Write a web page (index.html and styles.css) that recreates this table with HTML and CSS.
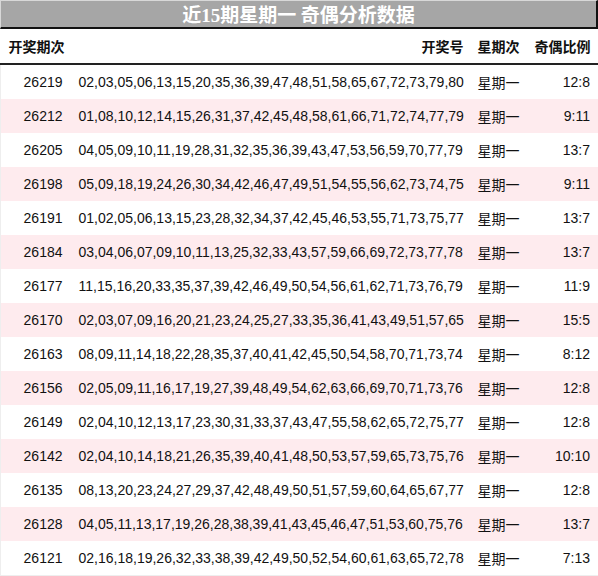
FILE: index.html
```html
<!DOCTYPE html>
<html lang="zh">
<head>
<meta charset="utf-8">
<title>近15期星期一 奇偶分析数据</title>
<link rel="stylesheet" href="styles.css">
</head>
<body>
<div class="title">近<span class="num">15</span>期星期一 奇偶分析数据</div>
<table class="data">
  <colgroup>
    <col class="c1"><col class="c2"><col class="c3"><col class="c4">
  </colgroup>
  <thead>
    <tr><th class="left">开奖期次</th><th class="right">开奖号</th><th class="week">星期次</th><th class="right">奇偶比例</th></tr>
  </thead>
  <tbody>
    <tr><td class="right">26219</td><td>02,03,05,06,13,15,20,35,36,39,47,48,51,58,65,67,72,73,79,80</td><td class="week">星期一</td><td class="right">12:8</td></tr>
    <tr><td class="right">26212</td><td>01,08,10,12,14,15,26,31,37,42,45,48,58,61,66,71,72,74,77,79</td><td class="week">星期一</td><td class="right">9:11</td></tr>
    <tr><td class="right">26205</td><td>04,05,09,10,11,19,28,31,32,35,36,39,43,47,53,56,59,70,77,79</td><td class="week">星期一</td><td class="right">13:7</td></tr>
    <tr><td class="right">26198</td><td>05,09,18,19,24,26,30,34,42,46,47,49,51,54,55,56,62,73,74,75</td><td class="week">星期一</td><td class="right">9:11</td></tr>
    <tr><td class="right">26191</td><td>01,02,05,06,13,15,23,28,32,34,37,42,45,46,53,55,71,73,75,77</td><td class="week">星期一</td><td class="right">13:7</td></tr>
    <tr><td class="right">26184</td><td>03,04,06,07,09,10,11,13,25,32,33,43,57,59,66,69,72,73,77,78</td><td class="week">星期一</td><td class="right">13:7</td></tr>
    <tr><td class="right">26177</td><td>11,15,16,20,33,35,37,39,42,46,49,50,54,56,61,62,71,73,76,79</td><td class="week">星期一</td><td class="right">11:9</td></tr>
    <tr><td class="right">26170</td><td>02,03,07,09,16,20,21,23,24,25,27,33,35,36,41,43,49,51,57,65</td><td class="week">星期一</td><td class="right">15:5</td></tr>
    <tr><td class="right">26163</td><td>08,09,11,14,18,22,28,35,37,40,41,42,45,50,54,58,70,71,73,74</td><td class="week">星期一</td><td class="right">8:12</td></tr>
    <tr><td class="right">26156</td><td>02,05,09,11,16,17,19,27,39,48,49,54,62,63,66,69,70,71,73,76</td><td class="week">星期一</td><td class="right">12:8</td></tr>
    <tr><td class="right">26149</td><td>02,04,10,12,13,17,23,30,31,33,37,43,47,55,58,62,65,72,75,77</td><td class="week">星期一</td><td class="right">12:8</td></tr>
    <tr><td class="right">26142</td><td>02,04,10,14,18,21,26,35,39,40,41,48,50,53,57,59,65,73,75,76</td><td class="week">星期一</td><td class="right">10:10</td></tr>
    <tr><td class="right">26135</td><td>08,13,20,23,24,27,29,37,42,48,49,50,51,57,59,60,64,65,67,77</td><td class="week">星期一</td><td class="right">12:8</td></tr>
    <tr><td class="right">26128</td><td>04,05,11,13,17,19,26,28,38,39,41,43,45,46,47,51,53,60,75,76</td><td class="week">星期一</td><td class="right">13:7</td></tr>
    <tr><td class="right">26121</td><td>02,16,18,19,26,32,33,38,39,42,49,50,52,54,60,61,63,65,72,78</td><td class="week">星期一</td><td class="right">7:13</td></tr>
  </tbody>
</table>
</body>
</html>
```
FILE: styles.css
```css
html, body {
  margin: 0;
  padding: 0;
  background: #fff;
}
body {
  width: 598px;
  font-family: "Liberation Sans", "Noto Sans CJK SC", sans-serif;
  color: #111;
}
.title {
  box-sizing: border-box;
  height: 29px;
  background: #a6a6a6;
  border-top: 1px solid #d8d8d8;
  border-left: 1px solid #d8d8d8;
  border-right: 2px solid #111;
  border-bottom: 2px solid #111;
  color: #fff;
  font-family: "Noto Sans CJK SC", sans-serif;
  font-weight: bold;
  font-size: 19px;
  line-height: 25px;
  text-align: center;
}
.title .num {
  font-family: "Liberation Serif", serif;
}
.data {
  width: 598px;
  border-collapse: collapse;
  table-layout: fixed;
  font-size: 14px;
}
.c1 { width: 70px; }
.c2 { width: 401px; }
.c3 { width: 54px; }
.c4 { width: 73px; }
.data th {
  height: 34px;
  padding: 0 8px;
  white-space: nowrap;
  font-family: "Noto Sans CJK SC", sans-serif;
  font-weight: bold;
  font-size: 14px;
  color: #111;
  border-bottom: 2px solid #222;
}
.data th.left { padding-right: 0; }
.data td {
  height: 34px;
  padding: 0 8px;
  white-space: nowrap;
}
.data tbody tr:nth-child(even) {
  background: #feebee;
}
.data tbody tr td:first-child { border-left: 1px solid #eee; }
.data tbody tr td:last-child { border-right: 1px solid #eee; }
.data tbody tr:last-child td { border-bottom: 1px solid #eee; }
.left { text-align: left; }
.right { text-align: right; }
.data .week {
  text-align: left;
  padding-left: 6px;
  padding-right: 0;
  font-family: "Noto Sans CJK SC", sans-serif;
}
```
